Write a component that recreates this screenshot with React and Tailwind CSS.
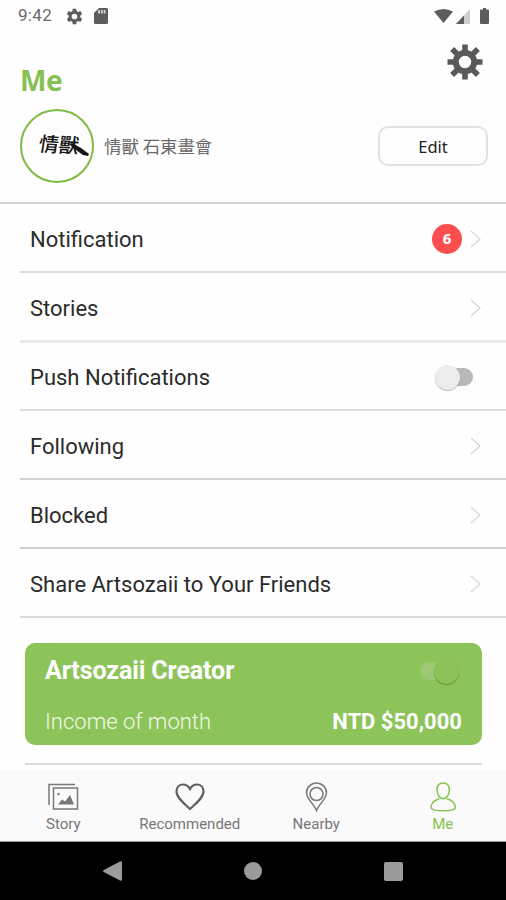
import React from "react";

const StatusBar = () => (
    <header className="flex h-8 items-center justify-between pl-[18px] pr-[17px] text-[#5c5c5c]">
        <div className="flex items-center">
            <span className="w-[48px] text-[17px] tracking-[0.3px] text-[#6a6a6a]">9:42</span>
            <svg className="size-[17px]" viewBox="0 0 24 24" fill="currentColor">
                <path fillRule="evenodd" d="M9.5 1h5l.5 3.4 2 1.2 3.300-1.300 2.500 4.300-2.700 2.200v2.400l2.700 2.200-2.500 4.300-3.300-1.300-2 1.200-.5 3.400h-5L9 19.600l-2-1.200-3.300 1.300-2.500-4.300 2.700-2.200v-2.400L1.200 8.600l2.500-4.300L7 5.600l2-1.200zM12 8a4 4 0 100 8 4 4 0 000-8z" />
            </svg>
            <svg className="ml-[11px] h-4 w-[14px]" viewBox="0 0 14 16">
                <path fill="#5c5c5c" d="M5 0h7.500Q14 0 14 1.500v13Q14 16 12.500 16h-11Q0 16 0 14.500V5z" />
                <path stroke="#d5d5d5" strokeWidth="1.800" d="M5 2v3.500M7.800 2v3.500M10.600 2v3.500" />
            </svg>
        </div>
        <div className="flex items-center">
            <svg className="h-[14px] w-[19px]" viewBox="0 0 19 14" fill="#5c5c5c">
                <path d="M0 2.500Q9.500-2.500 19 2.500L9.500 14z" />
            </svg>
            <svg className="ml-[3px] h-[15px] w-[14px]" viewBox="0 0 14 15">
                <path fill="#cfcfcf" d="M14 0v15H0z" />
                <path fill="#5c5c5c" d="M8 6.400V15H0z" />
            </svg>
            <svg className="ml-[10px] h-4 w-[9px]" viewBox="0 0 9 16" fill="#5c5c5c">
                <path d="M3 0h3v1.500h2q1 0 1 1V15q0 1-1 1H1q-1 0-1-1V2.500q0-1 1-1h2z" />
            </svg>
        </div>
    </header>
);

const SettingsIcon = () => (
    <svg className="size-9" viewBox="-18 -18 36 36">
        <circle r="9.200" fill="none" stroke="#595959" strokeWidth="6" />
        <path
            stroke="#595959"
            strokeWidth="5.600"
            d="M0-17.500V-10M0 17.500V10M-17.500 0H-10M17.500 0H10M-12.900-12.900l5 5M12.900 12.900l-5-5M-12.900 12.900l5-5M12.900-12.900l-5 5"
        />
    </svg>
);

const Profile = () => (
    <section className="flex h-[95px] items-start border-b-2 border-[#d6d6d6] pl-5 pr-[18px]">
        <div className="flex size-[74px] items-center justify-center rounded-full border-2 border-[#7fbb42]">
            <div className="relative -mt-1 ml-1">
                <span className="block rotate-3 -skew-x-6 font-['Noto_Sans_CJK_TC',sans-serif] text-[20px] font-medium leading-none text-[#161616]">情獸</span>
                <svg className="absolute -bottom-[3px] left-[29px] h-[15px] w-[22px]" viewBox="0 0 22 15">
                    <path d="M1 2l3-1 9 5 8 6-1 2-5-1-7-5z" fill="#161616" />
                </svg>
            </div>
        </div>
        <span className="ml-[10px] mt-[24px] font-['Noto_Sans_CJK_TC',sans-serif] text-[17.400px] leading-[26px] text-[#6a6a6a]">情獸 石東畫會</span>
        <button className="ml-auto mt-[17px] h-10 w-[110px] rounded-[10px] border-2 border-[#e2e2e2] pt-0.5 font-['Noto_Sans',sans-serif] text-[16.500px] font-normal text-[#222]">Edit</button>
    </section>
);

const Chevron = () => (
    <svg className="mt-0.5 h-[18px] w-[11px]" viewBox="0 0 11 18" fill="none" stroke="#d6d6d6" strokeWidth="1.200">
        <path d="M1 1l9 8-9 8" />
    </svg>
);

const Row = ({ label, line, children }) => (
    <div className={`ml-5 flex items-center justify-between pl-[10px] pr-[25px] ${line}`}>
        <span className="mt-1 text-[22px] leading-7 text-[#2b2b2b]">{label}</span>
        <div className="flex items-center">{children}</div>
    </div>
);

const Tab = ({ label, color, children }) => (
    <div className={`flex flex-1 flex-col items-center pt-3 ${color}`}>
        <svg className="h-[30px] w-8" viewBox="0 0 32 30" fill="none" stroke="currentColor" strokeWidth="1.500">
            {children}
        </svg>
        <span className="mt-[3px] text-[15px] leading-[18px]">{label}</span>
    </div>
);

const App = () => {
    return (
        <div className="flex h-[900px] w-[506px] flex-col overflow-hidden bg-[#fefefe] font-[Roboto,'Noto_Sans_CJK_TC',sans-serif]">
            <StatusBar />

            <div className="flex h-[77px] items-start justify-between pl-5 pr-[23px] pt-3">
                <h1 className="mt-[18px] font-['Noto_Sans',sans-serif] text-[28px] font-bold leading-9 tracking-[-0.5px] text-[#86c052]">Me</h1>
                <SettingsIcon />
            </div>

            <Profile />

            <main className="flex flex-col">
                <Row label="Notification" line="h-[69px] border-b-2 border-[#dedede]">
                    <span className="mr-2 mt-0.5 flex size-[30px] items-center justify-center rounded-full bg-[#fb4f4f] font-['Noto_Sans',sans-serif] text-[15px] font-bold text-white">6</span>
                    <Chevron />
                </Row>
                <Row label="Stories" line="h-[70px] border-b-[3px] border-[#e8e8e8]">
                    <Chevron />
                </Row>
                <Row label="Push Notifications" line="h-[68px] border-b-2 border-[#dedede]">
                    <div className="mr-2 mt-0.5 flex h-[18px] w-[38px] items-center rounded-full bg-linear-to-r from-transparent from-30% to-[#b9b9b9] to-30%">
                        <span className="size-[25px] shrink-0 rounded-full bg-[#ececec] shadow-[0_1px_1px_#00000044]"></span>
                    </div>
                </Row>
                <Row label="Following" line="h-[69px] border-b-2 border-[#d2d2d2]">
                    <Chevron />
                </Row>
                <Row label="Blocked" line="h-[69px] border-b-2 border-[#d0d0d0]">
                    <Chevron />
                </Row>
                <Row label="Share Artsozaii to Your Friends" line="h-[69px] border-b-2 border-[#dadada]">
                    <Chevron />
                </Row>
            </main>

            <section className="ml-[25px] mr-6 mt-[25px] h-[102px] rounded-[10px] bg-[#8dc45a] pl-5 pr-5 pt-3 text-white">
                <div className="flex h-8 items-center justify-between">
                    <h2 className="text-[25px] font-bold tracking-[-0.1px]">Artsozaii Creator</h2>
                    <div className="mr-[3px] flex h-[18px] w-[39px] items-center justify-end rounded-full bg-linear-to-r from-[#9bc974] from-70% to-transparent to-70%">
                        <span className="size-[25px] shrink-0 rounded-full bg-[#8cc359] shadow-[0_1px_1px_#3c641788]"></span>
                    </div>
                </div>
                <div className="mt-5 flex h-7 items-center justify-between">
                    <span className="text-[22px] font-light text-[#f1f8e9]">Income of month</span>
                    <span className="text-[22px] font-bold">NTD $50,000</span>
                </div>
            </section>
            <hr className="ml-[25px] mr-6 mt-[18px] border-t-2 border-[#dcdcdc]" />

            <nav className="mt-auto flex h-[72px] shrink-0 border-b border-[#999] bg-[#fafafa]">
                <Tab label="Story" color="text-[#777]">
                    <path d="M2 23V2.500h26" />
                    <path d="M6.500 6h24v21h-24z" />
                    <path d="M11 22.500l4-5 3 2 5-6.500 4 9.500z" fill="currentColor" stroke="none" />
                    <circle cx="11.500" cy="12" r="1.200" fill="currentColor" stroke="none" />
                </Tab>
                <Tab label="Recommended" color="text-[#777]">
                    <path stroke="#606060" strokeWidth="2.200" d="M16 27C11 22 2.500 16 2.500 9.500 2.500 5 5.500 2.500 9 2.500c3 0 5.500 1.700 7 4.500 1.500-2.800 4-4.500 7-4.500 3.500 0 6.500 2.500 6.500 7C29.500 16 21 22 16 27z" />
                </Tab>
                <Tab label="Nearby" color="text-[#777]">
                    <path d="M16.500 28.500C14 22 6.500 17 6.500 10.800a10 9.800 0 0120 0C26.500 17 19 22 16.500 28.500z" />
                    <circle cx="16.500" cy="12" r="6.500" />
                </Tab>
                <Tab label="Me" color="text-[#84c34f]">
                    <path d="M16.200 1C12 1 10 4.200 10 8c0 4.500 2.700 8.700 6.200 8.700S22.400 12.500 22.400 8c0-3.800-2-7-6.200-7z" />
                    <path d="M12.500 16.700C7.500 17.800 4 21.500 4 25.500c0 2 5 3.300 12.200 3.300s12.200-1.300 12.200-3.300c0-4-3.500-7.700-8.500-8.800" />
                </Tab>
            </nav>

            <footer className="flex h-[58px] shrink-0 items-center justify-between bg-black pl-[103px] pr-[103px]">
                <svg className="h-5 w-[19px]" viewBox="0 0 19 20" fill="#9b9b9b">
                    <path d="M17 .5Q19-.5 19 1.500v17q0 2-2 1L.8 11Q-.8 10 .8 9z" />
                </svg>
                <span className="size-[18px] rounded-full bg-[#9b9b9b]"></span>
                <span className="size-[19px] rounded-[2px] bg-[#9b9b9b]"></span>
            </footer>
        </div>
    );
};

export default App;
